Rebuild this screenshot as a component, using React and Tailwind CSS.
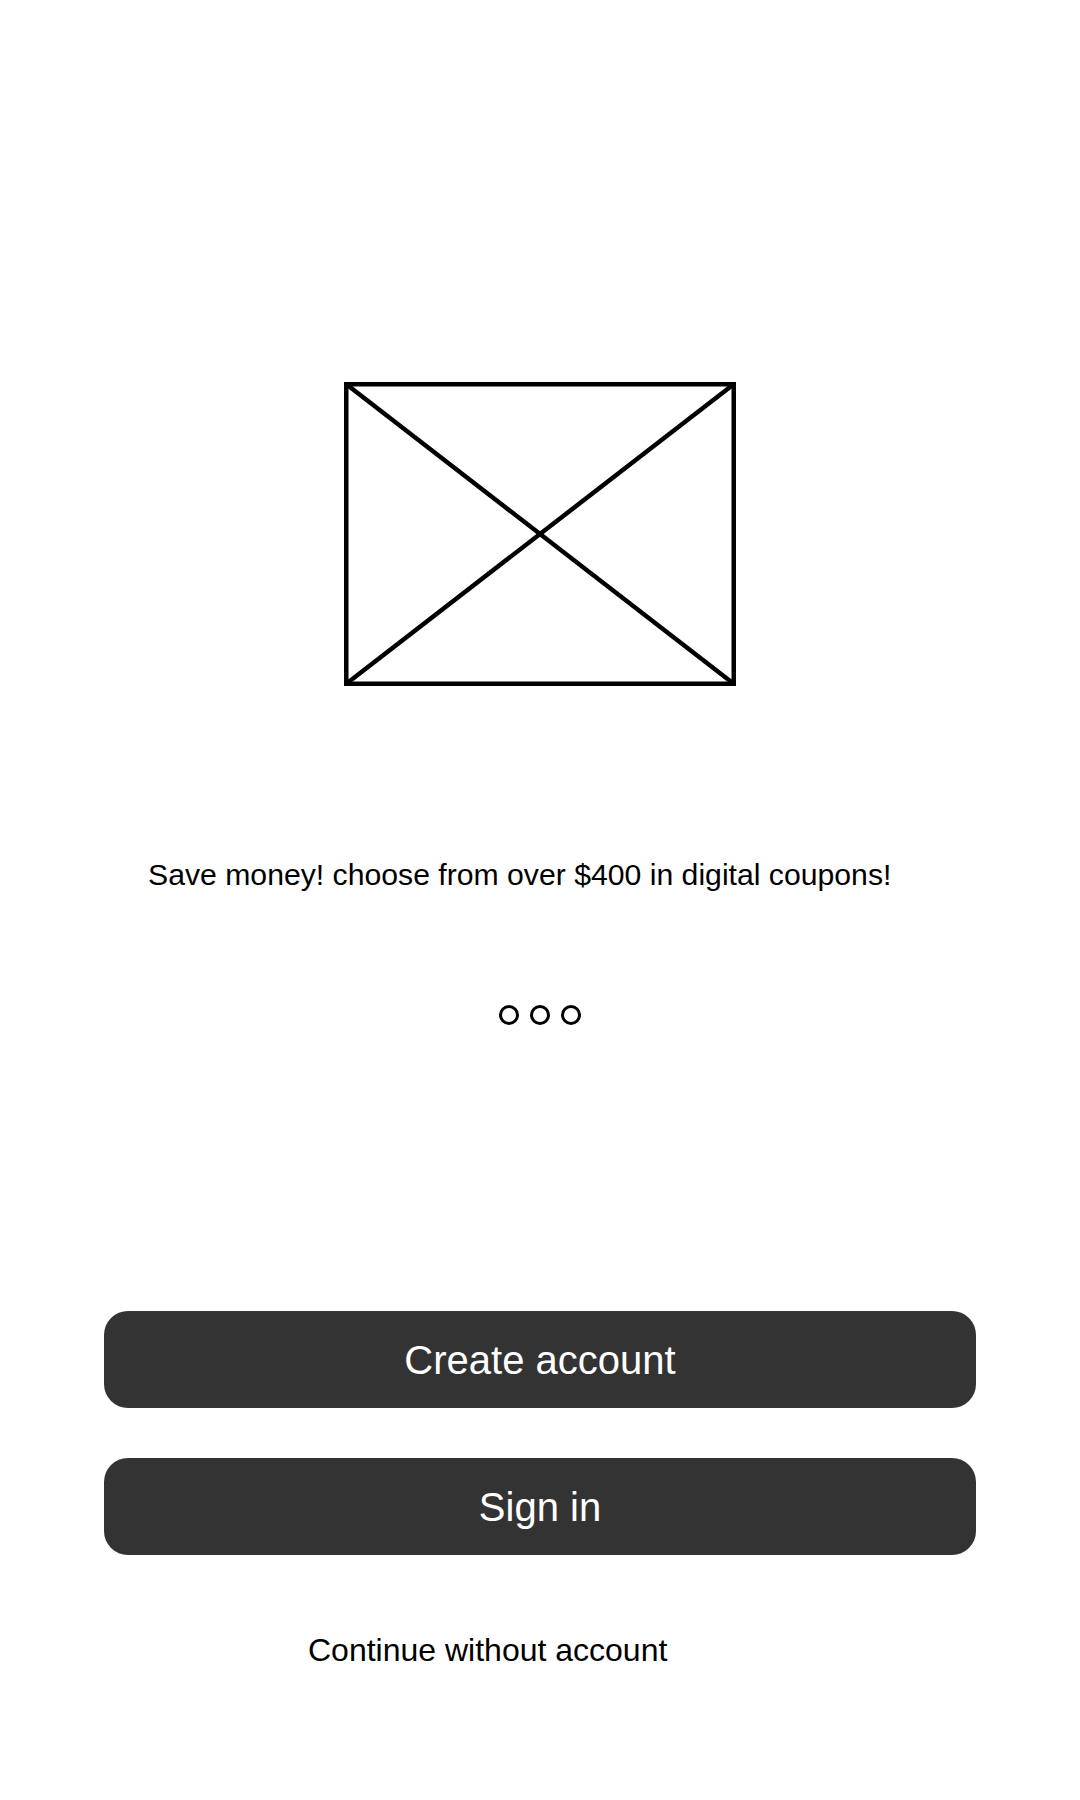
const FONT = { fontFamily: '"Liberation Sans", Arial, sans-serif' };

function ImagePlaceholder() {
  return (
    <svg width="392" height="304" viewBox="0 0 392 304" className="mx-auto block">
      <rect x="2.25" y="2.25" width="387.5" height="299.5" fill="none" stroke="#000" strokeWidth="4.5" />
      <line x1="2" y1="2" x2="390" y2="302" stroke="#000" strokeWidth="4.5" />
      <line x1="390" y1="2" x2="2" y2="302" stroke="#000" strokeWidth="4.5" />
    </svg>
  );
}

function PagerDots() {
  return (
    <div className="flex justify-center gap-[11px]">
      {[0, 1, 2].map((i) => (
        <div key={i} className="w-[20px] h-[20px] rounded-full border-[3px] border-black" />
      ))}
    </div>
  );
}

export default function App() {
  return (
    <div className="w-[1080px] h-[1800px] bg-white flex flex-col" style={FONT}>
      <div className="mt-[382px]">
        <ImagePlaceholder />
      </div>

      <p className="mt-[172px] pl-[148px] text-[30.2px] leading-[34px] text-black">
        Save money! choose from over $400 in digital coupons!
      </p>

      <div className="mt-[113px]">
        <PagerDots />
      </div>

      <div className="mt-[286px] px-[104px] flex flex-col gap-[50px]">
        <button className="h-[97px] w-full rounded-[24px] bg-[#333333] text-white text-[40px]">
          Create account
        </button>
        <button className="h-[97px] w-full rounded-[24px] bg-[#333333] text-white text-[40px]">
          Sign in
        </button>
      </div>

      <p className="mt-[77px] pl-[308px] text-[32px] leading-[37px] text-black">
        Continue without account
      </p>
    </div>
  );
}
